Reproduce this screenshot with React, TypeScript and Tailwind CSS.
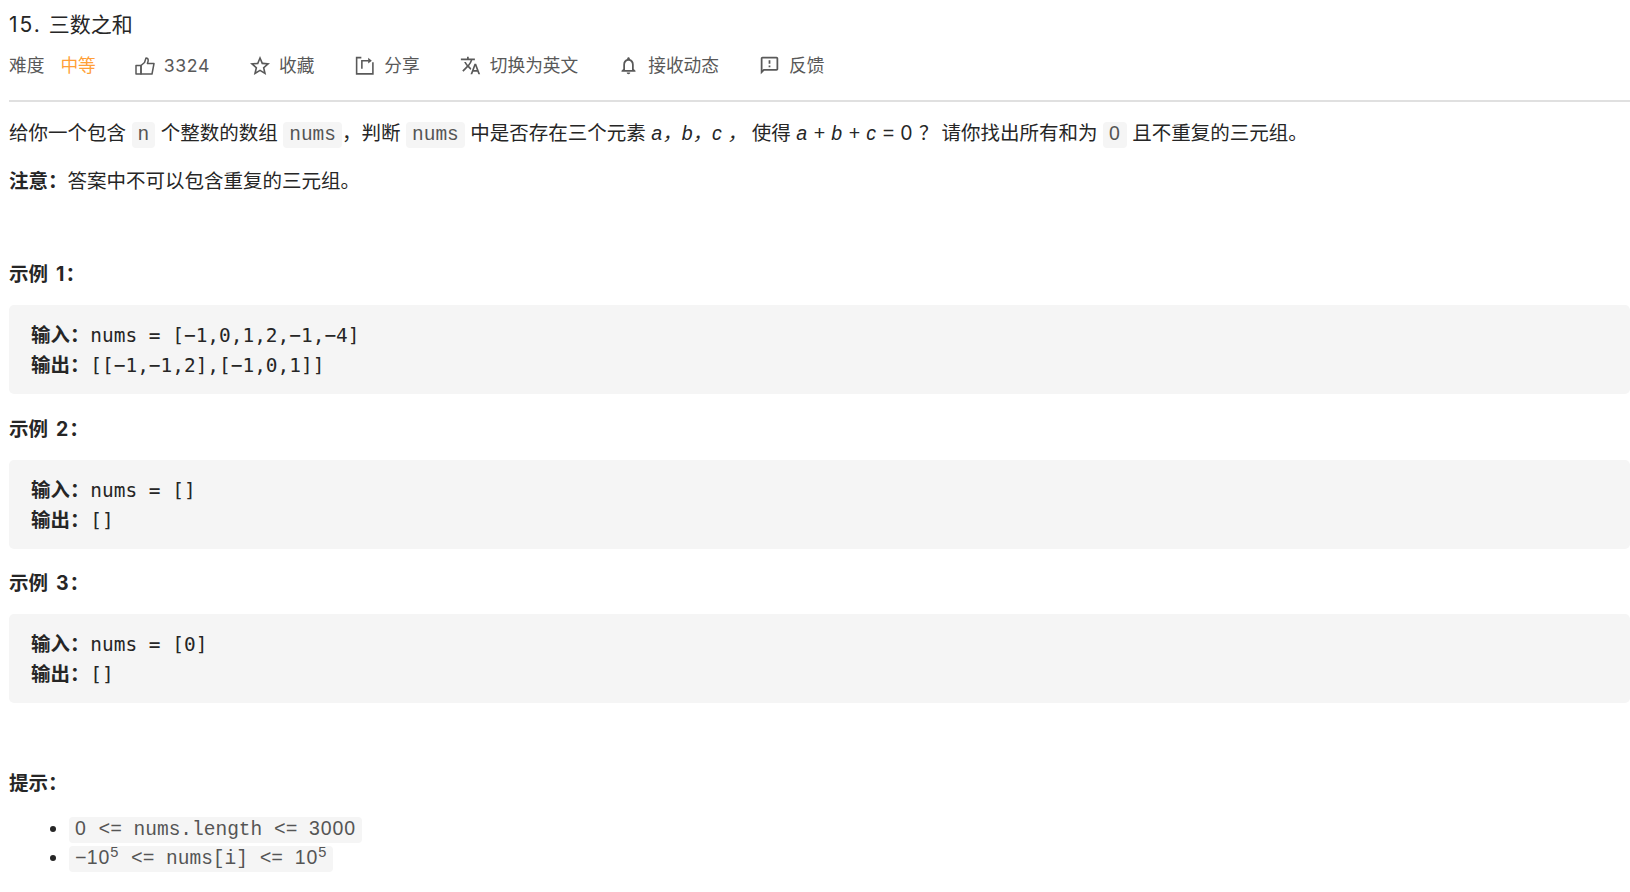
import { MdStarBorder, MdTranslate, MdNotificationsNone, MdOutlineFeedback } from 'react-icons/md';

const sans = 'font-["Inter","Noto_Sans_CJK_SC",sans-serif]';

function Code({ children }: { children: React.ReactNode }) {
  return (
    <code className='rounded-[4px] bg-[#f5f5f5] px-[6px] py-[2px] font-["Liberation_Mono","Noto_Sans_CJK_SC",monospace] text-[19.5px] text-[#555]'>
      {children}
    </code>
  );
}

// digits in the reference have no dotted zero, so they get a plain face at the mono advance
function Num({ children }: { children: React.ReactNode }) {
  return <span className='font-["Liberation_Sans",sans-serif] tracking-[0.9px]'>{children}</span>;
}

function ToolItem({ icon, label, className = '' }: { icon: React.ReactNode; label: string; className?: string }) {
  return (
    <span className={`flex items-center gap-[9px] ${className}`}>
      {icon}
      {label}
    </span>
  );
}

function ThumbIcon() {
  return (
    <svg width="21" height="21" viewBox="0 0 21 21" fill="none" stroke="currentColor" strokeWidth="1.5" strokeLinejoin="round">
      <path d="M2 10.500h5v8.500H2z" />
      <path d="M7 10.500 10.500 7.500 12 3c1.500 0 2.200 1 2.200 2.200 0 1.200-.5 2.300-.8 3.300H20l-2 10.500H7z" />
    </svg>
  );
}

function ShareIcon() {
  return (
    <svg width="21" height="21" viewBox="0 0 20 20" fill="none" stroke="currentColor" strokeWidth="1.5">
      <path d="M7 2.500H2.500V18H18V7" />
      <path d="M7.500 13V5.500H14" />
      <path d="M13.500 2.500 17 5.500 13.500 8z" fill="currentColor" stroke="none" />
    </svg>
  );
}

function Heading({ label, n }: { label: string; n: string }) {
  return (
    <h4 className="h-[33px] text-[19.5px] leading-[33px] font-bold text-[#262626]">
      {label}
      <span className="ml-[8px]">{n}</span>
      <span className="ml-[1px]">：</span>
    </h4>
  );
}

function Example({ n, input, output }: { n: string; input: string; output: string }) {
  return (
    <section>
      <Heading label="示例" n={n} />
      <pre className='mt-[14px] h-[89px] rounded-[5px] bg-[#f5f5f5] px-[22px] py-[16px] font-["DejaVu_Sans_Mono","Noto_Sans_CJK_SC",monospace] text-[19.45px] leading-[30px] text-[#262626]'>
        <div><b className="mr-[1px] font-semibold">输入：</b>{input}</div>
        <div><b className="mr-[1px] font-semibold">输出：</b>{output}</div>
      </pre>
    </section>
  );
}

export default function App() {
  return (
    <div className={`h-[892px] w-[1630px] overflow-hidden bg-white pl-[9px] text-[#262626] ${sans}`}>
      <h3 className="pt-[10px] text-[21px] leading-[30px] font-normal">
        <span className="tracking-[2px]">15.</span>
        <span className="ml-[7px]">三数之和</span>
      </h3>

      <div className="mt-[11px] flex h-[30px] items-center text-[17.7px] text-[#595959]">
        <span>难度</span>
        <span className="ml-[16px] text-[#ff9f37]">中等</span>
        <ToolItem className="ml-[38px] tracking-[0.6px]" icon={<ThumbIcon />} label="3324" />
        <ToolItem className="ml-[40px]" icon={<MdStarBorder size={24} className="-ml-[1.5px] -mr-[2.5px]" />} label="收藏" />
        <ToolItem className="ml-[40px]" icon={<ShareIcon />} label="分享" />
        <ToolItem className="ml-[40px]" icon={<MdTranslate size={21} />} label="切换为英文" />
        <ToolItem className="ml-[40px]" icon={<MdNotificationsNone size={21} />} label="接收动态" />
        <ToolItem className="ml-[40px]" icon={<MdOutlineFeedback size={21} />} label="反馈" />
      </div>

      <hr className="mt-[19px] border-t-2 border-[#e0e0e0]" />

      <p className="mt-[15px] text-[19.5px] leading-[32px] whitespace-nowrap">
        给你一个包含 <Code>n</Code> 个整数的数组 <Code>nums</Code>，判断 <Code>nums</Code> 中是否存在三个元素 <i className='font-["Liberation_Sans","Noto_Sans_CJK_SC",sans-serif]'>a，b，c ，</i><span className="ml-[5px]">使得</span> <span className="[word-spacing:1px]"><i className='font-["Liberation_Sans",sans-serif]'>a + b + c = </i>0 ？</span><span className="ml-[3px]">请你找出所有和为</span> <Code><Num>0</Num></Code> 且不重复的三元组。
      </p>
      <p className="mt-[14px] text-[19.5px] leading-[32px]">
        <b>注意：</b>答案中不可以包含重复的三元组。
      </p>

      <div className="mt-[61px]">
        <Example n="1" input="nums = [−1,0,1,2,−1,−4]" output="[[−1,−1,2],[−1,0,1]]" />
      </div>
      <div className="mt-[19px]">
        <Example n="2" input="nums = []" output="[]" />
      </div>
      <div className="mt-[18px]">
        <Example n="3" input="nums = [0]" output="[]" />
      </div>

      <h4 className="mt-[64px] text-[19.5px] leading-[33px] font-bold">提示：</h4>
      <ul className="mt-[14px] list-disc pl-[60px] text-[19px] leading-[28px]">
        <li><Code><Num>0</Num> &lt;= nums.length &lt;= <Num>3000</Num></Code></li>
        <li className="-mt-[1px]"><Code>−<Num>10</Num><sup><Num>5</Num></sup> &lt;= nums[i] &lt;= <Num>10</Num><sup><Num>5</Num></sup></Code></li>
      </ul>
    </div>
  );
}
